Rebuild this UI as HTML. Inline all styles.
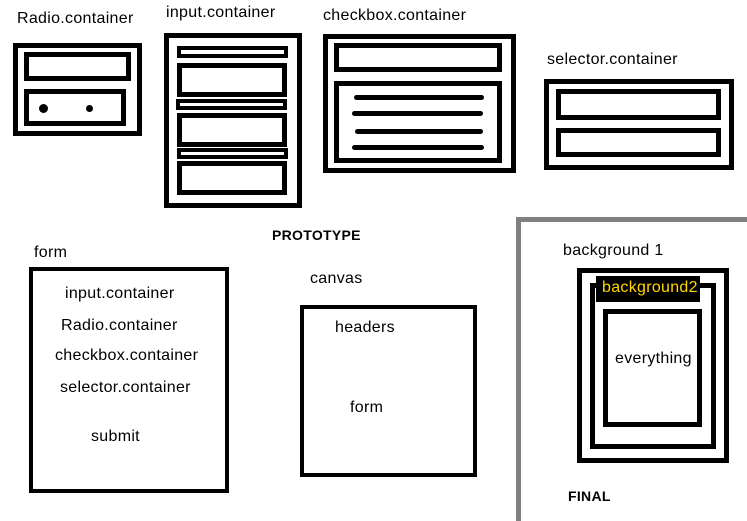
<!DOCTYPE html>
<html><head><style>
body{margin:0;width:747px;height:521px;background:#fff;position:relative;overflow:hidden;font-family:"Liberation Sans",sans-serif;}
.b{position:absolute;border:5px solid #000;box-sizing:border-box;}
.t{position:absolute;font-size:16px;letter-spacing:0.3px;color:#000;white-space:nowrap;}
.l{position:absolute;height:5px;background:#000;border-radius:3px;}
.d{position:absolute;background:#000;border-radius:50%;}
</style></head><body>
<div class="t" style="left:17px;top:10px">Radio.container</div>
<div class="b" style="left:13px;top:43px;width:129px;height:93px"></div>
<div class="b" style="left:24px;top:52px;width:107px;height:29px"></div>
<div class="b" style="left:24px;top:89px;width:102px;height:37px"></div>
<div class="d" style="left:39px;top:104px;width:9px;height:9px"></div>
<div class="d" style="left:86px;top:105px;width:7px;height:7px"></div>

<div class="t" style="left:166px;top:4px">input.container</div>
<div class="b" style="left:164px;top:33px;width:138px;height:175px"></div>
<div class="b" style="left:177px;top:46px;width:111px;height:12px;border-width:4px"></div>
<div class="b" style="left:177px;top:63px;width:110px;height:34px"></div>
<div class="b" style="left:176px;top:99px;width:111px;height:11px;border-width:4px"></div>
<div class="b" style="left:177px;top:113px;width:110px;height:34px"></div>
<div class="b" style="left:177px;top:148px;width:111px;height:11px;border-width:4px"></div>
<div class="b" style="left:177px;top:161px;width:110px;height:34px"></div>

<div class="t" style="left:323px;top:7px">checkbox.container</div>
<div class="b" style="left:323px;top:34px;width:193px;height:139px"></div>
<div class="b" style="left:334px;top:43px;width:168px;height:29px"></div>
<div class="b" style="left:334px;top:81px;width:168px;height:82px"></div>
<div class="l" style="left:354px;top:95px;width:130px"></div>
<div class="l" style="left:352px;top:111px;width:131px"></div>
<div class="l" style="left:355px;top:129px;width:128px"></div>
<div class="l" style="left:352px;top:145px;width:132px"></div>

<div class="t" style="left:547px;top:51px">selector.container</div>
<div class="b" style="left:544px;top:79px;width:190px;height:91px"></div>
<div class="b" style="left:556px;top:89px;width:165px;height:31px"></div>
<div class="b" style="left:556px;top:128px;width:165px;height:29px"></div>

<div class="t" style="left:272px;top:227px;font-weight:bold;font-size:14px">PROTOTYPE</div>

<div class="t" style="left:34px;top:244px">form</div>
<div class="b" style="left:29px;top:267px;width:200px;height:226px;border-width:4px"></div>
<div class="t" style="left:65px;top:285px">input.container</div>
<div class="t" style="left:61px;top:317px">Radio.container</div>
<div class="t" style="left:55px;top:347px">checkbox.container</div>
<div class="t" style="left:60px;top:379px">selector.container</div>
<div class="t" style="left:91px;top:428px">submit</div>

<div class="t" style="left:310px;top:270px">canvas</div>
<div class="b" style="left:300px;top:305px;width:177px;height:172px;border-width:4px"></div>
<div class="t" style="left:335px;top:319px">headers</div>
<div class="t" style="left:350px;top:399px">form</div>

<div style="position:absolute;left:516px;top:217px;width:5px;height:304px;background:#808080"></div>
<div style="position:absolute;left:516px;top:217px;width:231px;height:5px;background:#808080"></div>

<div class="t" style="left:563px;top:242px">background 1</div>
<div class="b" style="left:577px;top:268px;width:152px;height:195px"></div>
<div class="b" style="left:590px;top:283px;width:126px;height:166px"></div>
<div style="position:absolute;left:596px;top:276px;width:104px;height:26px;background:#000"></div>
<div class="t" style="left:602px;top:279px;color:#ffd700">background2</div>
<div class="b" style="left:603px;top:309px;width:99px;height:118px"></div>
<div class="t" style="left:615px;top:350px">everything</div>
<div class="t" style="left:568px;top:488px;font-weight:bold;font-size:14px">FINAL</div>
</body></html>
